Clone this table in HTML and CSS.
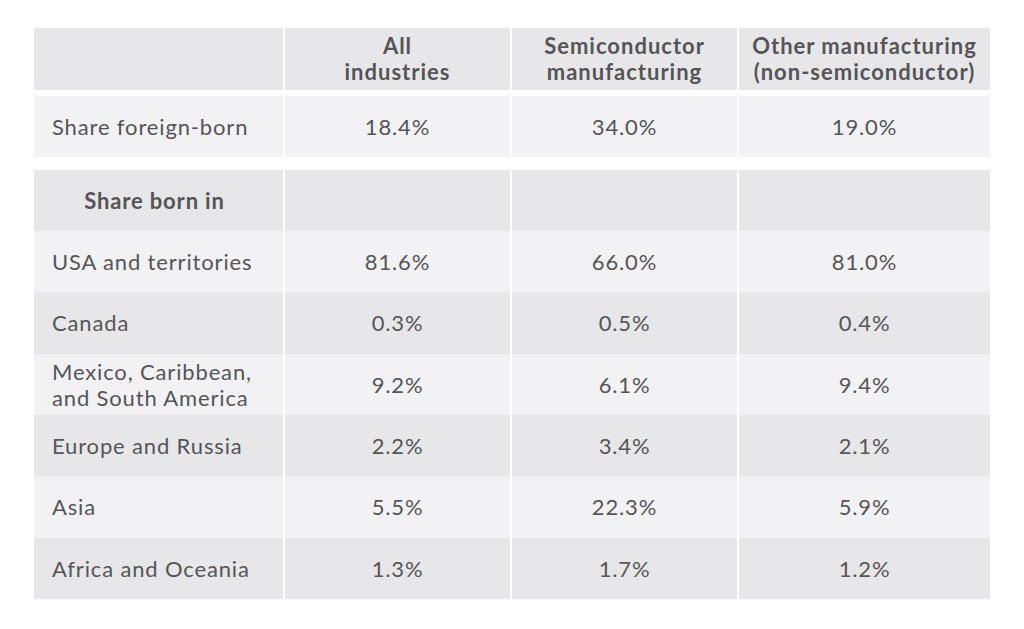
FILE: index.html
```html
<!DOCTYPE html>
<html lang="en">
<head>
<meta charset="utf-8">
<title>Share foreign-born</title>
<link rel="stylesheet" href="styles.css">
</head>
<body>
<div class="table">
  <div class="row head">
    <div class="cell"></div>
    <div class="cell num">All<br>industries</div>
    <div class="cell num">Semiconductor<br>manufacturing</div>
    <div class="cell num">Other manufacturing<br>(non-semiconductor)</div>
  </div>
  <div class="row single light">
    <div class="cell label">Share foreign-born</div>
    <div class="cell num">18.4%</div>
    <div class="cell num">34.0%</div>
    <div class="cell num">19.0%</div>
  </div>
  <div class="section">
    <div class="row dark">
      <div class="cell label sub">Share born in</div>
      <div class="cell"></div>
      <div class="cell"></div>
      <div class="cell"></div>
    </div>
    <div class="row light">
      <div class="cell label">USA and territories</div>
      <div class="cell num">81.6%</div>
      <div class="cell num">66.0%</div>
      <div class="cell num">81.0%</div>
    </div>
    <div class="row dark">
      <div class="cell label">Canada</div>
      <div class="cell num">0.3%</div>
      <div class="cell num">0.5%</div>
      <div class="cell num">0.4%</div>
    </div>
    <div class="row light">
      <div class="cell label">Mexico, Caribbean,<br>and South America</div>
      <div class="cell num">9.2%</div>
      <div class="cell num">6.1%</div>
      <div class="cell num">9.4%</div>
    </div>
    <div class="row dark">
      <div class="cell label">Europe and Russia</div>
      <div class="cell num">2.2%</div>
      <div class="cell num">3.4%</div>
      <div class="cell num">2.1%</div>
    </div>
    <div class="row light">
      <div class="cell label">Asia</div>
      <div class="cell num">5.5%</div>
      <div class="cell num">22.3%</div>
      <div class="cell num">5.9%</div>
    </div>
    <div class="row dark">
      <div class="cell label">Africa and Oceania</div>
      <div class="cell num">1.3%</div>
      <div class="cell num">1.7%</div>
      <div class="cell num">1.2%</div>
    </div>
  </div>
</div>
</body>
</html>
```
FILE: styles.css
```css
html, body {
  margin: 0;
  padding: 0;
  background: #ffffff;
}

body {
  font-family: Lato, "Noto Sans", "Liberation Sans", sans-serif;
  color: #555557;
  font-size: 22px;
  letter-spacing: 0.85px;
}

.table {
  width: 956px;
  margin: 28px 0 0 34px;
}

.row {
  display: grid;
  grid-template-columns: 249px 225px 225px 251px;
  column-gap: 2px;
}

.cell {
  display: flex;
  align-items: center;
  line-height: 26px;
}

.num {
  justify-content: center;
  text-align: center;
}

.label {
  padding-left: 18px;
}

.head {
  height: 62px;
  margin-bottom: 6px;
  font-weight: 700;
  letter-spacing: 1px;
}

.head .cell {
  background: #e7e7e9;
  line-height: 26.5px;
}

.single {
  height: 61px;
  margin-bottom: 13px;
}

.section .row {
  height: 61.33px;
}

.light .cell {
  background: #f2f2f4;
}

.dark .cell {
  background: #e7e7e9;
}

.label.sub {
  font-weight: 700;
  justify-content: center;
  padding-left: 0;
  padding-right: 8px;
}
```
